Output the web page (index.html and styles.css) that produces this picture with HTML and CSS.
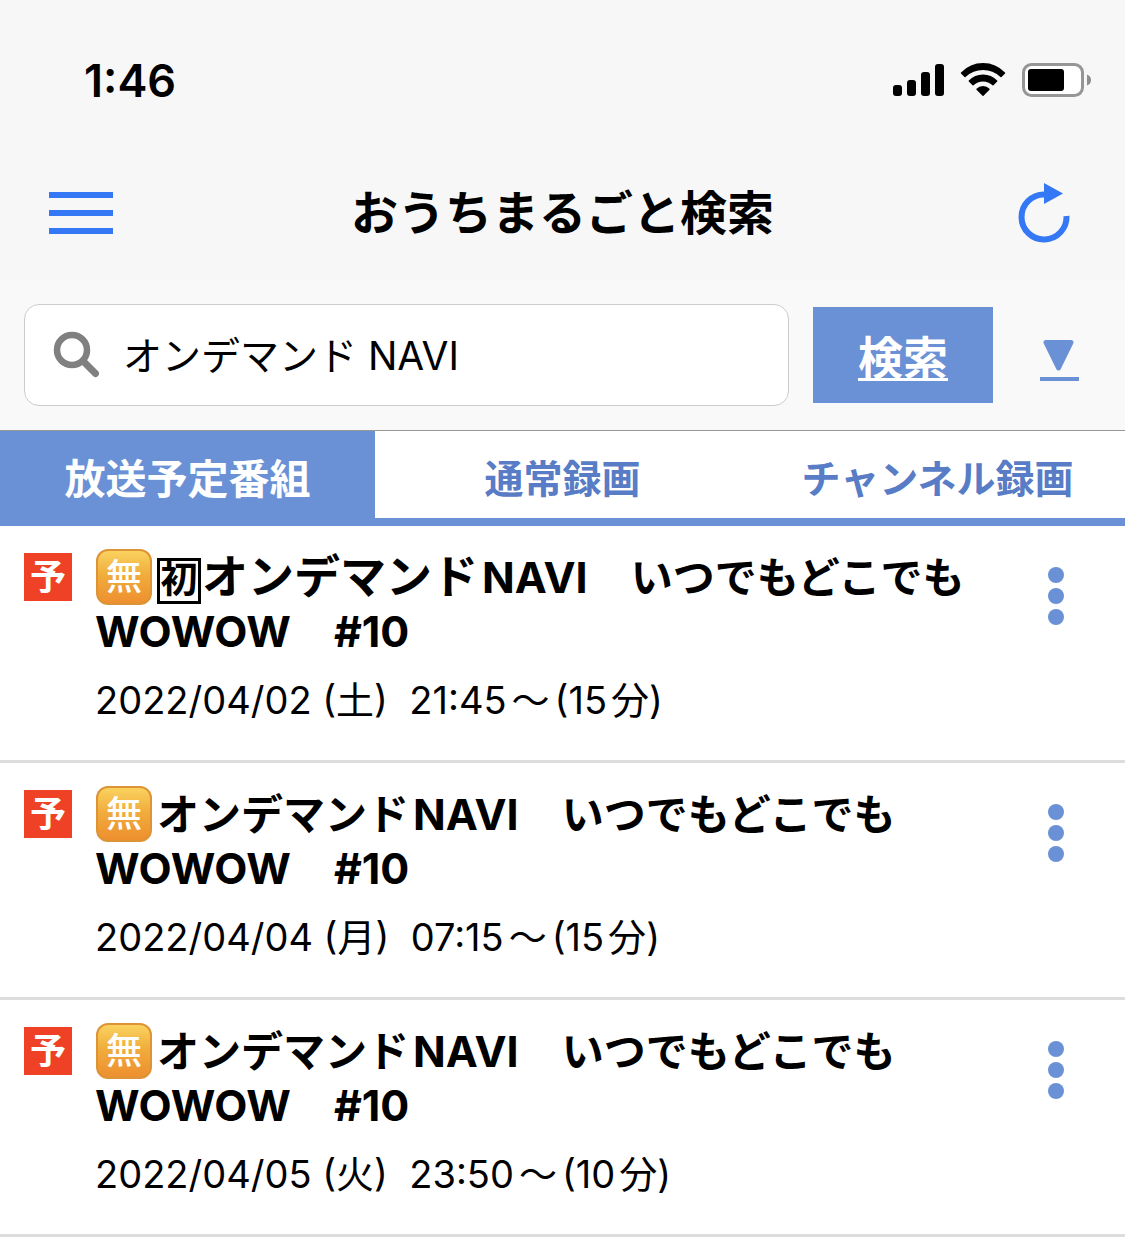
FILE: index.html
```html
<!DOCTYPE html>
<html lang="ja">
<head>
  <meta charset="UTF-8" />
  <meta name="viewport" content="width=device-width, initial-scale=1.0"/>
  <title>おうちまるごと検索</title>
  <link rel="stylesheet" href="styles.css">
</head>
<body>

  <div class="status-bar">
    <span class="clock">1:46</span>
    <div class="status-icons">
      <svg width="52" height="34" viewBox="0 0 52 34" aria-hidden="true">
        <rect x="1" y="22" width="9" height="11" rx="3"/>
        <rect x="15" y="17" width="9" height="16" rx="3"/>
        <rect x="29" y="9" width="9" height="24" rx="3"/>
        <rect x="43" y="1" width="9" height="32" rx="3"/>
      </svg>
      <svg width="46" height="34" viewBox="0 0 46 34" aria-hidden="true">
        <path d="M1 9.500Q10 0 23 0T45 9.500Q45.500 10 45 10.500L41.500 14Q41 14.500 40.500 14Q33 7 23 7T5.500 14Q5 14.500 4.500 14L1 10.500Q0.500 10 1 9.500Z"/>
        <path d="M8.800 17.500Q14.500 11.500 23 11.500T37.200 17.500Q37.700 18 37.200 18.500L33.500 22.300Q33 22.800 32.500 22.300Q28.500 18.500 23 18.500T13.500 22.300Q13 22.800 12.500 22.300L8.800 18.500Q8.300 18 8.800 17.500Z"/>
        <path d="M16.500 25.700Q19 23 23 23T29.500 25.700Q30 26.200 29.500 26.700L23.500 32.800Q23 33.300 22.500 32.800L16.500 26.700Q16 26.200 16.500 25.700Z"/>
      </svg>
      <svg width="70" height="34" viewBox="0 0 70 34" aria-hidden="true">
        <rect x="1.500" y="1.500" width="59" height="31" rx="8" fill="#fff" stroke="#969696" stroke-width="3"/>
        <rect x="6" y="6" width="36" height="22" rx="3"/>
        <path d="M65 11.500Q69 13 69 17T65 22.500Z" fill="#8c8c8c"/>
      </svg>
    </div>
  </div>

  <header class="nav-bar">
    <button class="icon-btn" type="button" aria-label="メニュー">
      <svg width="64" height="64" viewBox="0 0 64 64">
        <path d="M0 14h64M0 32h64M0 50h64" stroke="#3478f6" stroke-width="6"/>
      </svg>
    </button>
    <h1>おうちまるごと検索</h1>
    <button class="icon-btn" type="button" aria-label="更新">
      <svg width="64" height="64" viewBox="0 0 64 64">
        <path d="M32 13.500A22.500 22.500 0 1 0 54.500 35" fill="none" stroke="#3478f6" stroke-width="6"/>
        <path d="M32 2L51 12.500L32 23Z" fill="#3478f6"/>
      </svg>
    </button>
  </header>

  <form class="search-bar">
    <label class="search-box">
      <svg width="46" height="48" viewBox="0 0 46 48" role="img" aria-label="キーワード">
        <circle cx="19" cy="19" r="15" fill="none" stroke="#808080" stroke-width="6.500"/>
        <path d="M30 30L42.500 42.500" stroke="#808080" stroke-width="7" stroke-linecap="round"/>
      </svg>
      <input type="text" value="オンデマンド NAVI">
    </label>
    <button class="search-btn" type="button">検索</button>
    <button class="filter-btn" type="button" aria-label="絞り込み">
      <svg width="40" height="44" viewBox="0 0 40 44">
        <path d="M7 4.500H32L19.500 30Z" fill="#6a91d5" stroke="#6a91d5" stroke-width="5" stroke-linejoin="round"/>
        <rect x="1" y="39" width="39" height="4" fill="#6a91d5"/>
      </svg>
    </button>
  </form>

  <nav class="tabs">
    <a class="tab active" href="#broadcast">放送予定番組</a>
    <a class="tab" href="#recorded">通常録画</a>
    <a class="tab" href="#channel">チャンネル録画</a>
  </nav>

  <ul class="results" id="broadcast">
    <li class="item">
      <span class="badge">予</span>
      <div class="info">
        <h2><span class="free">無</span><span class="first">初</span><span class="kana name wide">オンデマンド</span>NAVI　<span class="kana">いつでもどこでも</span>WOWOW　#10</h2>
        <p>2022/04/02 (土)&nbsp; 21:45<span class="to">～</span>(15<span class="min">分</span>)</p>
      </div>
      <button class="more" type="button" aria-label="その他"><i></i><i></i><i></i></button>
    </li>
    <li class="item">
      <span class="badge">予</span>
      <div class="info">
        <h2><span class="free">無</span><span class="kana name">オンデマンド</span>NAVI　<span class="kana">いつでもどこでも</span>WOWOW　#10</h2>
        <p>2022/04/04 (月)&nbsp; 07:15<span class="to">～</span>(15<span class="min">分</span>)</p>
      </div>
      <button class="more" type="button" aria-label="その他"><i></i><i></i><i></i></button>
    </li>
    <li class="item">
      <span class="badge">予</span>
      <div class="info">
        <h2><span class="free">無</span><span class="kana name">オンデマンド</span>NAVI　<span class="kana">いつでもどこでも</span>WOWOW　#10</h2>
        <p>2022/04/05 (火)&nbsp; 23:50<span class="to">～</span>(10<span class="min">分</span>)</p>
      </div>
      <button class="more" type="button" aria-label="その他"><i></i><i></i><i></i></button>
    </li>
  </ul>

</body>
</html>
```
FILE: styles.css
```css
* {
  box-sizing: border-box;
}

body {
  margin: 0;
  font-family: Inter, "Noto Sans CJK JP", sans-serif;
  background-color: #fff;
  color: #000;
}

h1, h2, p, ul {
  margin: 0;
  padding: 0;
}

button {
  display: flex;
  align-items: center;
  justify-content: center;
  padding: 0;
  border: none;
  background: none;
  font-family: inherit;
  cursor: pointer;
}

svg {
  display: block;
  flex: none;
}

/* status bar */
.status-bar {
  display: flex;
  align-items: center;
  justify-content: space-between;
  height: 148px;
  padding: 12px 33px 0 84px;
  background-color: #f7f7f7;
}

.clock {
  font-size: 45px;
  font-weight: 600;
}

.status-icons {
  display: flex;
  gap: 16px;
}

/* title bar */
.nav-bar {
  display: flex;
  align-items: center;
  justify-content: space-between;
  height: 132px;
  padding: 0 49px 2px;
  background-color: #f7f7f7;
}

.nav-bar h1 {
  font-size: 47px;
  font-weight: 600;
  line-height: 64px;
}

/* search */
.search-bar {
  display: flex;
  align-items: center;
  height: 151px;
  padding: 0 24px;
  background-color: #f9f9f9;
  border-bottom: 1px solid #999;
}

.search-box {
  display: flex;
  flex: 1;
  align-items: center;
  gap: 24px;
  height: 102px;
  padding: 0 28px;
  background-color: #fff;
  border: 1px solid #ccc;
  border-radius: 15px;
}

.search-box input {
  flex: 1;
  min-width: 0;
  padding: 0 0 5px;
  border: none;
  outline: none;
  background: none;
  color: #000;
  font-family: inherit;
  font-size: 39px;
}

.search-btn {
  width: 180px;
  height: 96px;
  margin-left: 24px;
  background-color: #6a91d5;
  color: #fff;
  font-size: 45px;
  font-weight: 600;
  text-decoration: underline;
  text-decoration-thickness: 3px;
  text-underline-offset: 3px;
}

.filter-btn {
  width: 84px;
  height: 96px;
  margin: 10px 0 0 24px;
}

/* tabs */
.tabs {
  display: flex;
  height: 95px;
  border-bottom: 8px solid #6a91d5;
}

.tab {
  display: flex;
  flex: 1;
  align-items: center;
  justify-content: center;
  padding-top: 3px;
  color: #587cc5;
  font-size: 39px;
  font-weight: 600;
  text-decoration: none;
}

.tab.active {
  background-color: #6a91d5;
  color: #fff;
  font-size: 41px;
}

/* results */
.results {
  list-style: none;
}

.item {
  display: flex;
  align-items: flex-start;
  padding: 24px 24px 36px;
  border-bottom: 3px solid #ddd;
}

.badge {
  flex: none;
  width: 48px;
  margin: 3px 23px 0 0;
  background-color: #ee4126;
  color: #fff;
  font-size: 36px;
  font-weight: 700;
  line-height: 48px;
  text-align: center;
}

.info {
  flex: 1;
  min-width: 0;
}

.info h2 {
  font-size: 43px;
  font-weight: 700;
  line-height: 54px;
}

.info p {
  margin-top: 18px;
  font-size: 38px;
  line-height: 48px;
}

.to {
  margin: 0 5px;
}

.min {
  margin-left: 4px;
}

.kana {
  font-size: 42px;
  line-height: 1;
}

.name {
  margin-right: 4px;
}

.wide {
  font-size: 46px;
}

.free,
.first {
  display: inline-block;
  text-align: center;
  vertical-align: top;
}

/* orange "free" mark */
.free {
  width: 56px;
  height: 56px;
  margin: -1px 5px -1px 1px;
  border: 2px solid #dd9437;
  border-radius: 12px;
  background: linear-gradient(#fbd25f, #f0ad3d 45%, #ee8f2f);
  color: #fff;
  font-size: 36px;
  font-weight: 500;
  line-height: 52px;
}

.first {
  width: 44px;
  height: 46px;
  margin: 8px 1px 0 0;
  border: 3px solid #000;
  font-size: 37px;
  line-height: 38px;
}

.more {
  flex: none;
  flex-direction: column;
  gap: 5px;
  width: 90px;
  margin-top: 17px;
}

.more i {
  width: 16px;
  height: 16px;
  border-radius: 50%;
  background-color: #6a91d5;
}
```
